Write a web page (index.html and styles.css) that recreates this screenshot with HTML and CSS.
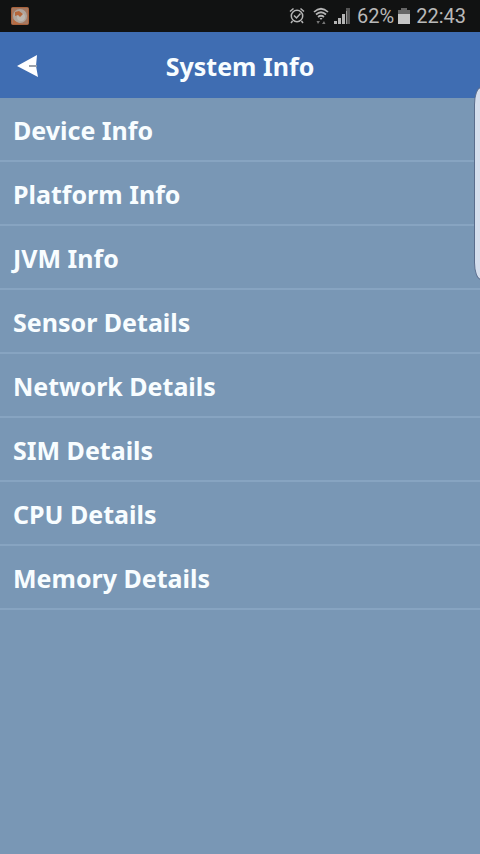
FILE: index.html
```html
<!DOCTYPE html>
<html lang="en">
<head>
<meta charset="utf-8">
<meta name="viewport" content="width=device-width, initial-scale=1">
<title>System Info</title>
<link rel="stylesheet" href="styles.css">
</head>
<body>
<div class="status">
  <svg class="app-icon" width="18" height="18" viewBox="0 0 18 18" aria-hidden="true">
    <rect x=".5" y=".5" width="17" height="17" rx="1" fill="#a57860" stroke="#a9623c"/>
    <circle cx="9" cy="9" r="7" fill="#b0a59c"/>
    <circle cx="10" cy="10" r="4" fill="#bdb7b0"/>
    <path d="M4 5l4-1 4 3-3 3-2-2-3 1z" fill="#b5663a"/>
    <path d="M2 12q4 5 10 4l-4 1H2z" fill="#b76c43"/>
  </svg>
  <div class="indicators">
    <svg width="16" height="18" viewBox="0 0 16 18" fill="none" stroke="#b5b5b5" stroke-width="1.5" aria-hidden="true">
      <circle cx="8" cy="9" r="5.7"/>
      <path d="M1 4.5L4.5 1.5M15 4.5L11.5 1.5M3.5 14L2 16M12.5 14L14 16M5 8.5L7.5 11L11.5 6.5"/>
    </svg>
    <svg class="wifi" width="16" height="18" viewBox="0 0 16 18" fill="none" stroke="#b5b5b5" stroke-width="1.7" aria-hidden="true">
      <path d="M1 5Q8-1.5 15 5M3 7.5Q8 3 13 7.5M5 10Q8 7.5 11 10"/>
      <path d="M6.5 11h3L8 13z" fill="#b5b5b5" stroke="none"/>
      <path d="M3.5 14h3.5L5 17zM9 17h3.5L11 14z" fill="#777" stroke="none"/>
    </svg>
    <svg class="signal" width="17" height="16" viewBox="0 0 17 16" aria-hidden="true">
      <path d="M0 13h3v3H0zM4 10h3v6H4zM8 6h3v10H8z" fill="#b5b5b5"/>
      <path d="M12 0h4v16h-4z" fill="#555"/>
      <path d="M12 3h1v13h-1z" fill="#999"/>
    </svg>
    <span class="battery-text">62%</span>
    <svg class="battery" width="12" height="16" viewBox="0 0 12 16" aria-hidden="true">
      <path d="M3 0h6v2h3v4H0V2h3z" fill="#666"/>
      <path d="M0 6h12v10H0z" fill="#c5c5c5"/>
    </svg>
    <time>22:43</time>
  </div>
</div>
<header class="header">
  <button class="back" type="button" aria-label="Back">
    <svg width="22" height="24" viewBox="0 0 22 24" aria-hidden="true">
      <path d="M0 12L20 1 19 12 21 23z" fill="#fff"/>
      <path d="M12 12h8" stroke="#9aa1ab" stroke-width="2"/>
    </svg>
  </button>
  <h1>System Info</h1>
</header>
<nav>
  <ul class="menu">
    <li><a href="#device">Device Info</a></li>
    <li><a href="#platform">Platform Info</a></li>
    <li><a href="#jvm">JVM Info</a></li>
    <li><a href="#sensor">Sensor Details</a></li>
    <li><a href="#network">Network Details</a></li>
    <li><a href="#sim">SIM Details</a></li>
    <li><a href="#cpu">CPU Details</a></li>
    <li><a href="#memory">Memory Details</a></li>
  </ul>
</nav>
<div class="edge-handle"></div>
</body>
</html>
```
FILE: styles.css
```css
* {
  box-sizing: border-box;
}

body {
  position: relative;
  min-height: 100vh;
  margin: 0;
  overflow-x: hidden;
  background: #7997b5;
  color: #f8fdff;
  font-family: "Noto Sans", "Open Sans", sans-serif;
}

.status {
  display: flex;
  align-items: center;
  justify-content: space-between;
  height: 32px;
  padding: 0 14px 0 11px;
  background: #111212;
  color: #b9b9b9;
  font-family: Roboto, sans-serif;
  font-size: 20px;
  line-height: 32px;
}

.indicators {
  display: flex;
  align-items: center;
}

.wifi {
  margin-left: 8px;
}

.signal {
  margin-left: 5px;
}

.battery-text {
  margin-left: 6px;
}

.battery {
  margin: 0 6px 0 4px;
}

.header {
  display: grid;
  grid-template-columns: 56px 1fr 56px;
  align-items: center;
  height: 66px;
  padding-top: 2px;
  background: #3f6db2;
}

.header h1 {
  margin: 0;
  font-size: 25px;
  font-weight: 700;
  line-height: 36px;
  text-align: center;
}

.back {
  display: flex;
  align-items: center;
  height: 60px;
  padding: 0 0 0 17px;
  border: 0;
  background: none;
}

.menu {
  margin: 0;
  padding: 0;
  list-style: none;
}

.menu a {
  display: block;
  height: 64px;
  padding: 14px 13px 12px;
  border-bottom: 2px solid #87a4c1;
  color: inherit;
  font-size: 25px;
  font-weight: 700;
  line-height: 36px;
  text-decoration: none;
}

.edge-handle {
  position: absolute;
  top: 87px;
  right: -8px;
  width: 14px;
  height: 193px;
  border: 1px solid #596c8c;
  border-radius: 8px / 20px;
  background: #d5deed;
}
```
